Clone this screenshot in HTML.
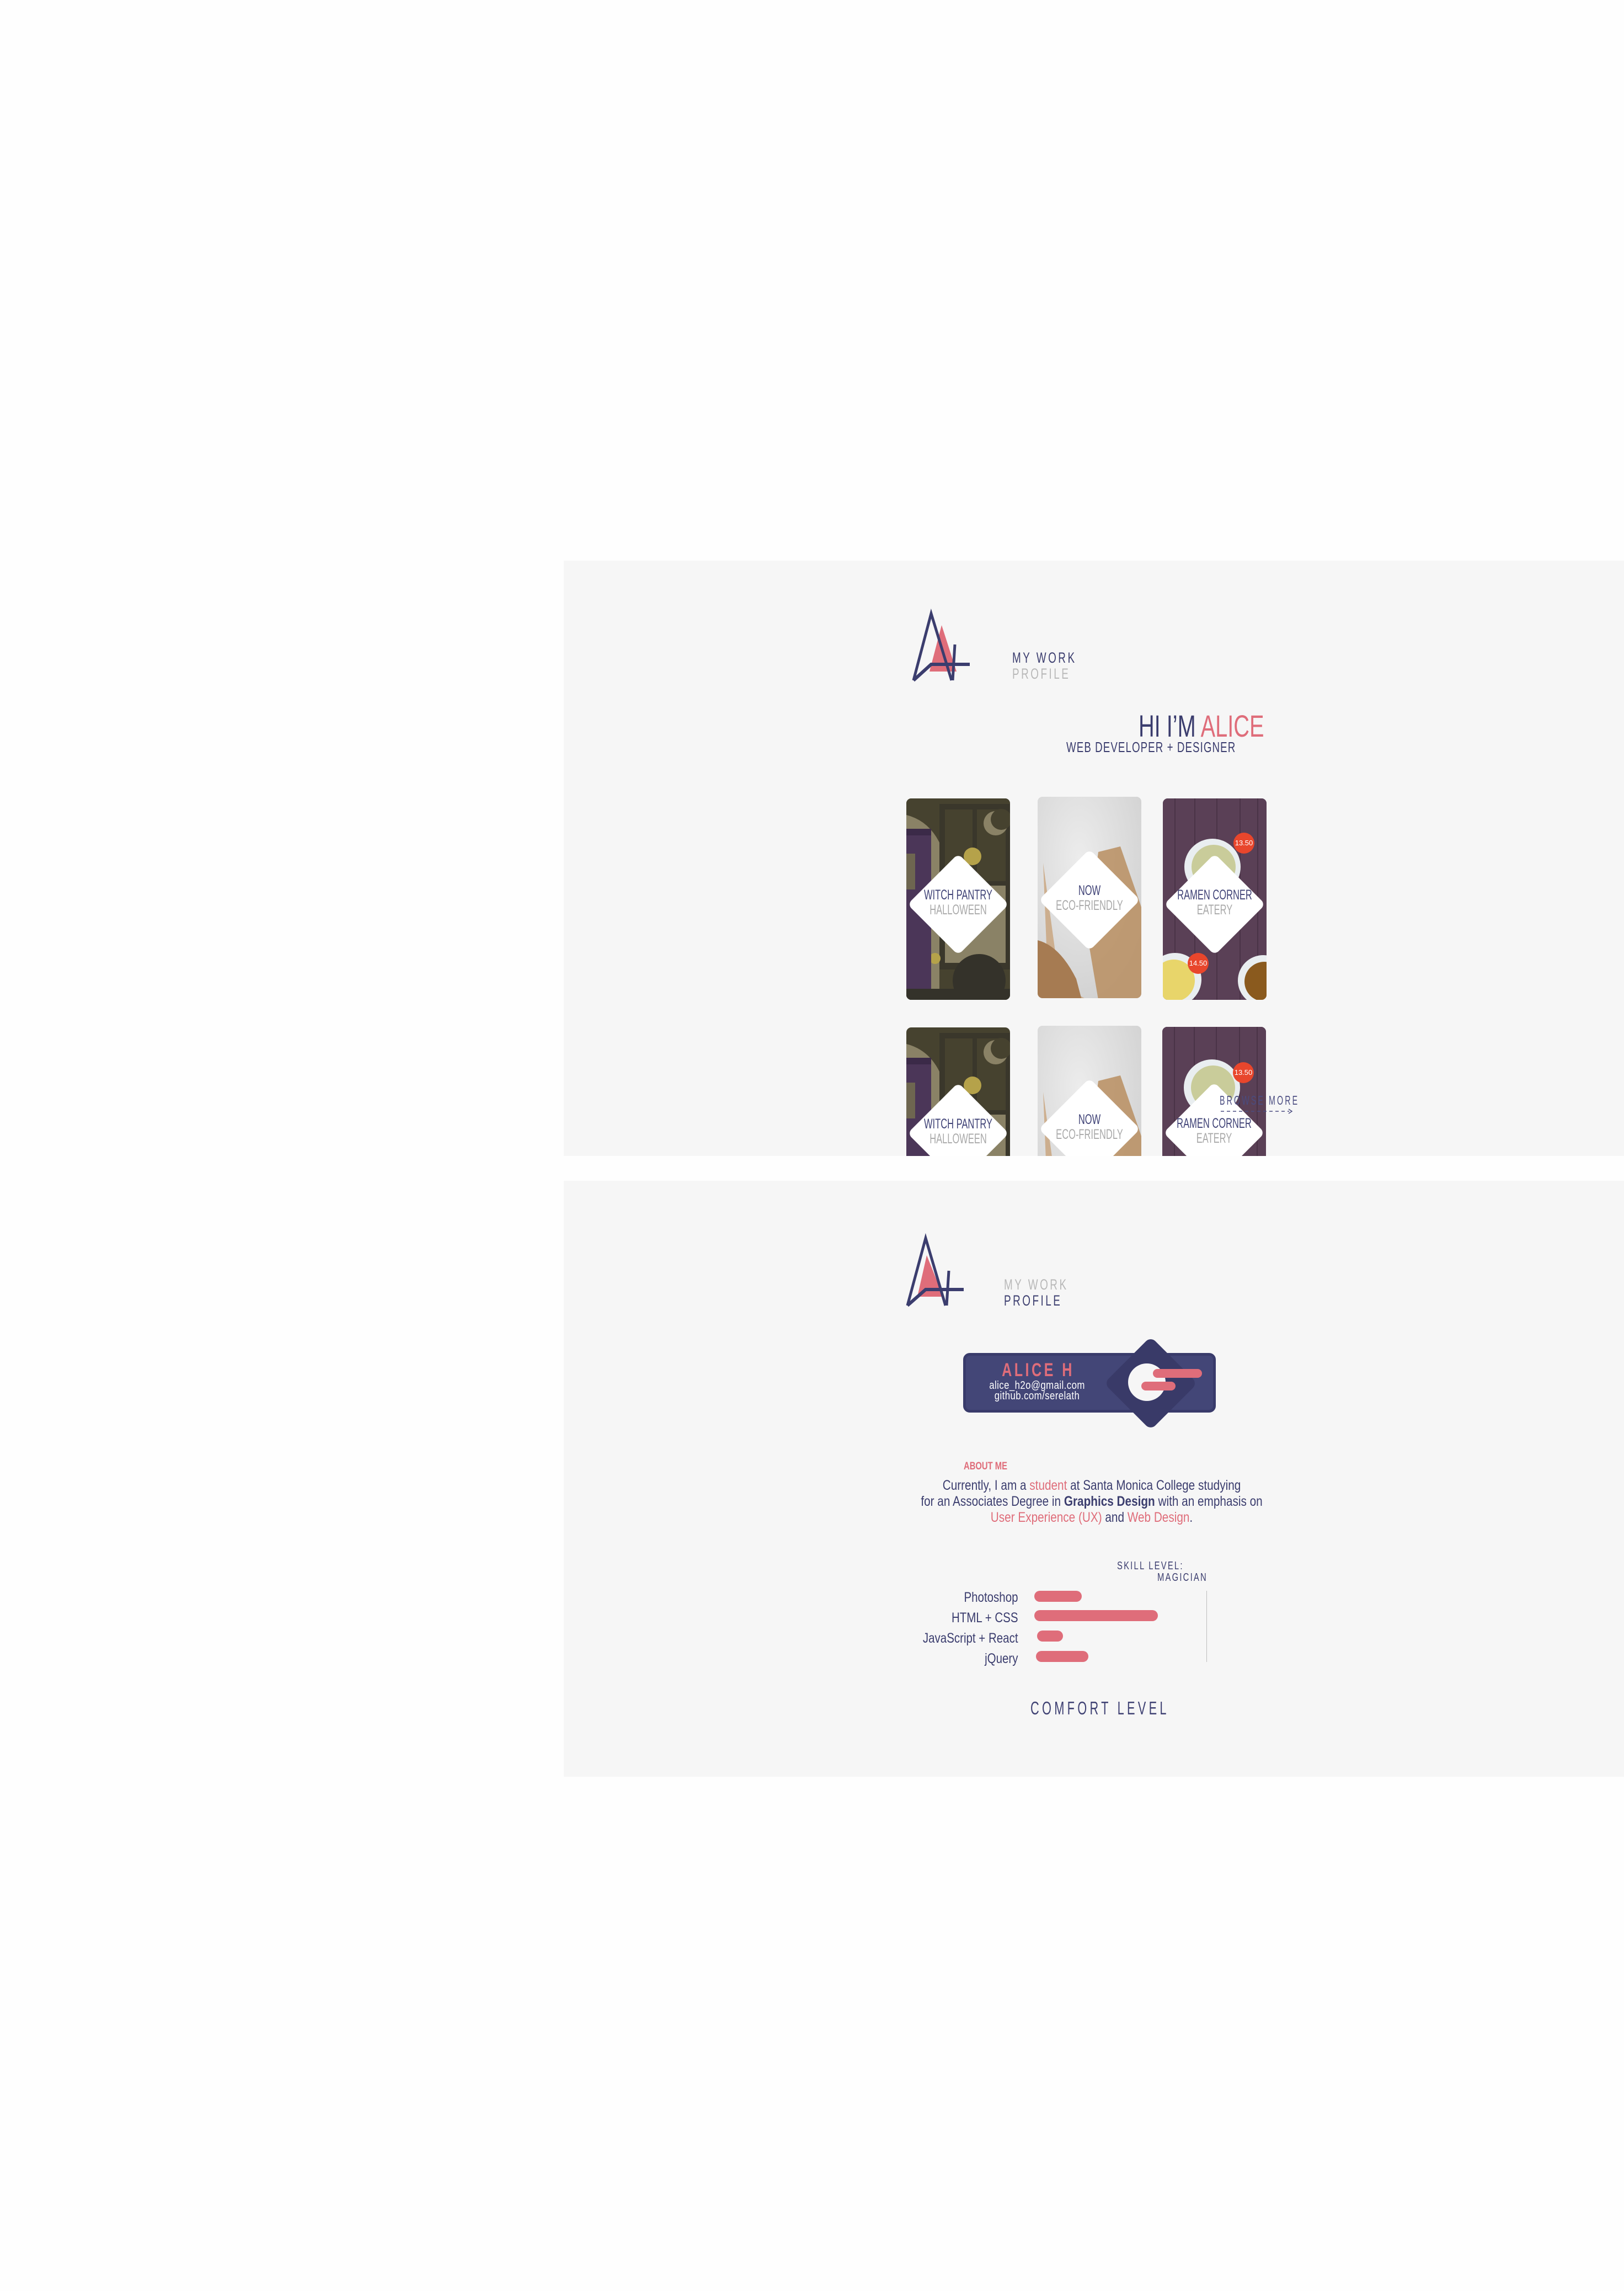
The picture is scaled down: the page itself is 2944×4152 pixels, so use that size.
<!DOCTYPE html>
<html><head><meta charset="utf-8"><style>
*{margin:0;padding:0;box-sizing:border-box}
body{width:2944px;height:4152px;background:#fefefe;position:relative;overflow:hidden;font-family:"Liberation Sans",sans-serif;color:#3b3d6e}
.panel{position:absolute;left:1022px;width:1922px;background:#f6f6f6;overflow:hidden}
.abs{position:absolute;white-space:nowrap}
.L{transform-origin:0 0}
.R{transform-origin:100% 0}
.C{transform-origin:50% 0}
.card{position:absolute;width:188px;height:365px;border-radius:9px;overflow:hidden}
.dia{position:absolute;width:130px;height:130px;background:#fff;border-radius:10px;transform:rotate(45deg);left:29px;top:127px}
.ct{position:absolute;left:-40px;width:268px;text-align:center;font-size:25px;line-height:27px;top:162px;transform:scaleX(0.66);transform-origin:50% 0;white-space:nowrap}
.ct b{display:block;font-weight:normal;color:#3f4276}
.ct i{display:block;font-style:normal;color:#a9a9a9}
.badge{position:absolute;width:38px;height:38px;border-radius:50%;background:#e8462c;color:#fff;font-size:13px;line-height:38px;text-align:center}
</style></head><body>

<div class="panel" style="top:1016px;height:1079px">
<svg class="abs" style="left:0;top:0" width="1922" height="1079">
<g transform="translate(-1022,-1016)">
<polygon points="1707,1133 1685,1217 1734,1217" fill="#df6d7a"/>
<polyline points="1656,1233 1688,1112 1725,1233" fill="none" stroke="#3b3d6e" stroke-width="5"/>
<polyline points="1656,1233 1688,1204 1758,1204" fill="none" stroke="#3b3d6e" stroke-width="6"/>
<line x1="1731" y1="1168" x2="1727" y2="1233" stroke="#3b3d6e" stroke-width="5"/>
</g></svg>
<div class="abs L" style="left:813px;top:161px;font-size:27px;letter-spacing:5px;line-height:30px;color:#3b3d6e;transform:scaleX(0.7)">MY WORK</div>
<div class="abs L" style="left:813px;top:190px;font-size:27px;letter-spacing:5px;line-height:30px;color:#b8b8b8;transform:scaleX(0.7)">PROFILE</div>
<div class="abs R" style="right:652px;top:270px;font-size:56px;line-height:60px;color:#3b3d6e;transform:scaleX(0.71)">HI I’M <span style="color:#df6d7a">ALICE</span></div>
<div class="abs L" style="left:911px;top:324px;font-size:26px;letter-spacing:1.5px;line-height:28px;color:#3b3d6e;transform:scaleX(0.72)">WEB DEVELOPER + DESIGNER</div>

<!-- row 1 -->
<div class="card" style="left:621px;top:431px;background:#46422f">
<svg width="188" height="365" style="position:absolute;left:0;top:0">
<rect x="0" y="0" width="188" height="365" fill="#46422f"/>
<path d="M0,30 Q40,40 60,80 L60,365 L0,365Z" fill="#8a8266"/>
<rect x="60" y="10" width="128" height="300" fill="#3a372b"/>
<rect x="70" y="20" width="50" height="130" fill="#46422f"/><rect x="128" y="20" width="52" height="130" fill="#46422f"/>
<rect x="70" y="158" width="110" height="140" fill="#8a8266"/>
<circle cx="162" cy="45" r="22" fill="#8a8266"/><circle cx="172" cy="38" r="19" fill="#46422f"/>
<circle cx="120" cy="105" r="16" fill="#b5a24a"/><circle cx="52" cy="290" r="10" fill="#b5a24a"/>
<rect x="0" y="55" width="45" height="310" fill="#4b3658"/><rect x="0" y="55" width="45" height="12" fill="#3b2a48"/>
<path d="M0,100 L16,100 L16,165 L0,165Z" fill="#6e6650"/>
<circle cx="132" cy="330" r="48" fill="#34322a"/>
<rect x="0" y="345" width="188" height="20" fill="#34322a"/>
</svg>
<div class="dia"></div><div class="ct"><b>WITCH PANTRY</b><i>HALLOWEEN</i></div></div>

<div class="card" style="left:859px;top:428px;background:#dcdcdc">
<svg width="188" height="368" style="position:absolute;left:0;top:0">
<defs><radialGradient id="m" cx="0.4" cy="0.3" r="0.8"><stop offset="0" stop-color="#ececec"/><stop offset="1" stop-color="#cfcfcf"/></radialGradient></defs>
<rect width="188" height="368" fill="url(#m)"/>
<path d="M10,120 L40,340 L90,368 L20,368Z" fill="#c8a27a" opacity=".8"/>
<path d="M110,100 L150,90 L188,200 L188,368 L110,368 L90,250Z" fill="#b98e60" opacity=".85"/>
<path d="M0,260 Q40,270 70,330 L80,368 L0,368Z" fill="#a67b52"/>
</svg>
<div class="dia" style="top:122px"></div><div class="ct" style="top:157px"><b>NOW</b><i>ECO-FRIENDLY</i></div></div>

<div class="card" style="left:1086px;top:431px;background:#5b4257">
<svg width="188" height="365" style="position:absolute;left:0;top:0">
<rect width="188" height="365" fill="#5a4056"/>
<g stroke="#4a3347" stroke-width="2"><line x1="22" y1="0" x2="22" y2="365"/><line x1="58" y1="0" x2="58" y2="365"/><line x1="98" y1="0" x2="98" y2="365"/><line x1="140" y1="0" x2="140" y2="365"/><line x1="172" y1="0" x2="172" y2="365"/></g>
<circle cx="90" cy="124" r="51" fill="#e9eef0"/><circle cx="92" cy="124" r="40" fill="#c9cc9a"/>
<circle cx="22" cy="328" r="48" fill="#e9eef0"/><circle cx="20" cy="330" r="38" fill="#e8d56a"/>
<circle cx="182" cy="330" r="46" fill="#e9eef0"/><circle cx="184" cy="332" r="36" fill="#8a5a1e"/>
</svg>
<div class="badge" style="left:128px;top:62px">13.50</div>
<div class="dia"></div><div class="ct"><b>RAMEN CORNER</b><i>EATERY</i></div>
<div class="badge" style="left:45px;top:280px">14.50</div></div>

<!-- row 2 -->
<div class="card" style="left:621px;top:846px;background:#46422f">
<svg width="188" height="365" style="position:absolute;left:0;top:0">
<path d="M0,30 Q40,40 60,80 L60,365 L0,365Z" fill="#8a8266"/>
<rect x="60" y="10" width="128" height="300" fill="#3a372b"/>
<rect x="70" y="20" width="50" height="130" fill="#46422f"/><rect x="128" y="20" width="52" height="130" fill="#46422f"/>
<rect x="70" y="158" width="110" height="140" fill="#8a8266"/>
<circle cx="162" cy="45" r="22" fill="#8a8266"/><circle cx="172" cy="38" r="19" fill="#46422f"/>
<circle cx="120" cy="105" r="16" fill="#b5a24a"/>
<rect x="0" y="55" width="45" height="310" fill="#4b3658"/><rect x="0" y="55" width="45" height="12" fill="#3b2a48"/>
<path d="M0,100 L16,100 L16,165 L0,165Z" fill="#6e6650"/>
</svg>
<div class="dia"></div><div class="ct"><b>WITCH PANTRY</b><i>HALLOWEEN</i></div></div>

<div class="card" style="left:859px;top:843px;background:#dcdcdc">
<svg width="188" height="368" style="position:absolute;left:0;top:0">
<defs><radialGradient id="m2" cx="0.4" cy="0.3" r="0.8"><stop offset="0" stop-color="#ececec"/><stop offset="1" stop-color="#cfcfcf"/></radialGradient></defs>
<rect width="188" height="368" fill="url(#m2)"/>
<path d="M10,120 L40,340 L90,368 L20,368Z" fill="#c8a27a" opacity=".8"/>
<path d="M110,100 L150,90 L188,200 L188,368 L110,368 L90,250Z" fill="#b98e60" opacity=".85"/>
</svg>
<div class="dia" style="top:122px"></div><div class="ct" style="top:157px"><b>NOW</b><i>ECO-FRIENDLY</i></div></div>

<div class="card" style="left:1085px;top:845px;background:#5b4257">
<svg width="188" height="365" style="position:absolute;left:0;top:0">
<rect width="188" height="365" fill="#5a4056"/>
<g stroke="#4a3347" stroke-width="2"><line x1="22" y1="0" x2="22" y2="365"/><line x1="58" y1="0" x2="58" y2="365"/><line x1="98" y1="0" x2="98" y2="365"/><line x1="140" y1="0" x2="140" y2="365"/><line x1="172" y1="0" x2="172" y2="365"/></g>
<circle cx="90" cy="110" r="51" fill="#e9eef0"/><circle cx="92" cy="110" r="40" fill="#c9cc9a"/>
</svg>
<div class="badge" style="left:128px;top:64px">13.50</div>
<div class="dia"></div><div class="ct"><b>RAMEN CORNER</b><i>EATERY</i></div></div>

<div class="abs L" style="left:1189px;top:965px;font-size:23px;letter-spacing:5px;line-height:26px;color:#4a4c80;transform:scaleX(0.62);z-index:5">BROWSE MORE</div>
<svg class="abs" style="left:1189px;top:990px;z-index:5" width="140" height="16"><line x1="2" y1="8" x2="126" y2="8" stroke="#4a4c80" stroke-width="1.5" stroke-dasharray="6,5"/><polyline points="125,4 131,8 125,12" fill="none" stroke="#4a4c80" stroke-width="1.5"/></svg>
</div>

<div class="panel" style="top:2140px;height:1080px">
<svg class="abs" style="left:0;top:0" width="1922" height="1080">
<g transform="translate(-1022,-2140)">
<polygon points="1680,2275 1663,2350 1710,2350" fill="#df6d7a"/>
<polyline points="1645,2366 1678,2244 1714,2366" fill="none" stroke="#3b3d6e" stroke-width="5"/>
<polyline points="1645,2366 1678,2337 1747,2337" fill="none" stroke="#3b3d6e" stroke-width="6"/>
<line x1="1720" y1="2303" x2="1716" y2="2366" stroke="#3b3d6e" stroke-width="5"/>
</g></svg>
<div class="abs L" style="left:798px;top:173px;font-size:27px;letter-spacing:5px;line-height:30px;color:#b8b8b8;transform:scaleX(0.7)">MY WORK</div>
<div class="abs L" style="left:798px;top:202px;font-size:27px;letter-spacing:5px;line-height:30px;color:#3b3d6e;transform:scaleX(0.7)">PROFILE</div>

<div class="abs" style="left:724px;top:312px;width:458px;height:108px;background:#434677;border:5px solid #393b6b;border-radius:12px"></div>
<div class="abs" style="left:1004px;top:307px;width:120px;height:120px;background:#393a68;border-radius:12px;transform:rotate(45deg)"></div>
<div class="abs" style="left:1023px;top:331px;width:68px;height:68px;border-radius:50%;background:#f6f6f6"></div>
<div class="abs" style="left:1068px;top:341px;width:89px;height:16px;border-radius:8px;background:#df6d7a"></div>
<div class="abs" style="left:1047px;top:364px;width:62px;height:16px;border-radius:8px;background:#df6d7a"></div>
<div class="abs C" style="left:732px;top:325px;width:256px;text-align:center;font-size:34px;font-weight:bold;letter-spacing:6px;line-height:36px;color:#df6d7a;transform:scaleX(0.74)">ALICE H</div>
<div class="abs C" style="left:729px;top:362px;width:258px;text-align:center;font-size:20px;line-height:19px;color:#fff;letter-spacing:0.5px;transform:scaleX(0.84)">alice_h2o@gmail.com<br>github.com/serelath</div>

<div class="abs L" style="left:725px;top:507px;font-size:19px;font-weight:bold;color:#df6d7a;transform:scaleX(0.78)">ABOUT ME</div>
<div class="abs C" style="left:457px;top:538px;width:1000px;text-align:center;font-size:25px;line-height:29px;color:#3b3d6e;transform:scaleX(0.83)">Currently, I am a <span style="color:#df6d7a">student</span> at Santa Monica College studying<br>for an Associates Degree in <b>Graphics Design</b> with an emphasis on<br><span style="color:#df6d7a">User Experience (UX)</span> and <span style="color:#df6d7a">Web Design</span>.</div>

<div class="abs L" style="left:1003px;top:687px;font-size:20px;letter-spacing:3px;line-height:22px;color:#3b3d6e;transform:scaleX(0.74)">SKILL LEVEL:</div>
<div class="abs R" style="right:755px;top:708px;font-size:20px;letter-spacing:3px;line-height:22px;color:#3b3d6e;transform:scaleX(0.74)">MAGICIAN</div>
<div class="abs" style="left:1165px;top:743px;width:1px;height:129px;background:#bdbdbd"></div>
<div class="abs R" style="right:1098px;top:737px;font-size:25px;line-height:37px;text-align:right;transform:scaleX(0.82)">Photoshop<br>HTML + CSS<br>JavaScript + React<br>jQuery</div>
<div class="abs" style="left:853px;top:743px;width:86px;height:20px;border-radius:10px;background:#df6d7a"></div>
<div class="abs" style="left:853px;top:778px;width:224px;height:20px;border-radius:10px;background:#df6d7a"></div>
<div class="abs" style="left:858px;top:815px;width:47px;height:20px;border-radius:10px;background:#df6d7a"></div>
<div class="abs" style="left:856px;top:852px;width:95px;height:20px;border-radius:10px;background:#df6d7a"></div>
<div class="abs L" style="left:846px;top:937px;font-size:33px;letter-spacing:8px;line-height:38px;color:#3f4173;transform:scaleX(0.66)">COMFORT LEVEL</div>
</div>
</body></html>
